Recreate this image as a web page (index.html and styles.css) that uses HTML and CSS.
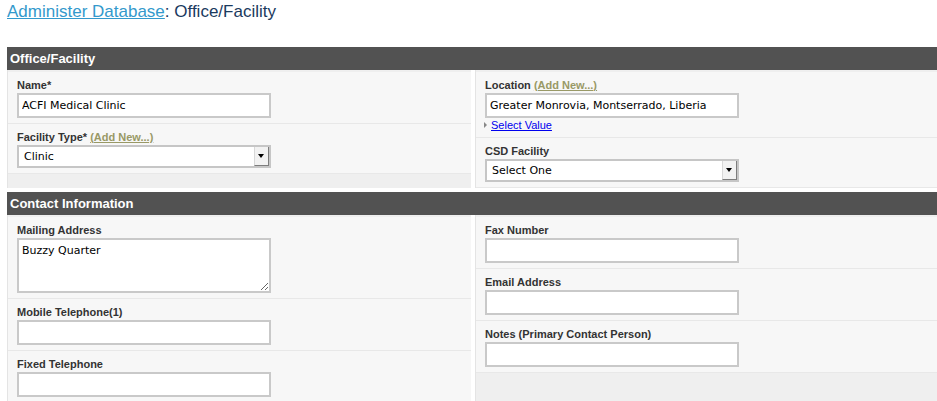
FILE: index.html
```html
<!DOCTYPE html>
<html lang="en">
<head>
    <meta charset="UTF-8">
    <meta name="viewport" content="width=device-width, initial-scale=1.0">
    <title>Administer Database: Office/Facility</title>
    <link rel="stylesheet" href="styles.css">
</head>
<body>
    <h1 class="page-title"><a href="#">Administer Database</a>: Office/Facility</h1>

    <div class="section">
        <div class="section-head">Office/Facility</div>
        <div class="section-body">
            <div class="col">
                <div class="field">
                    <label>Name*</label>
                    <input type="text" class="text" value="ACFI Medical Clinic">
                </div>
                <div class="field">
                    <label>Facility Type* <a href="#" class="add-new">(Add New...)</a></label>
                    <span class="select-wrap"><select><option>Clinic</option></select></span>
                </div>
            </div>
            <div class="col">
                <div class="field">
                    <label>Location <a href="#" class="add-new">(Add New...)</a></label>
                    <input type="text" class="text" value="Greater Monrovia, Montserrado, Liberia">
                    <div class="select-value"><span class="arrow"></span><a href="#">Select Value</a></div>
                </div>
                <div class="field">
                    <label>CSD Facility</label>
                    <span class="select-wrap"><select><option>Select One</option></select></span>
                </div>
            </div>
        </div>
    </div>

    <div class="section">
        <div class="section-head">Contact Information</div>
        <div class="section-body">
            <div class="col">
                <div class="field">
                    <label>Mailing Address</label>
                    <textarea class="text area">Buzzy Quarter</textarea>
                </div>
                <div class="field">
                    <label>Mobile Telephone(1)</label>
                    <input type="text" class="text" value="">
                </div>
                <div class="field">
                    <label>Fixed Telephone</label>
                    <input type="text" class="text" value="">
                </div>
            </div>
            <div class="col">
                <div class="field">
                    <label>Fax Number</label>
                    <input type="text" class="text" value="">
                </div>
                <div class="field">
                    <label>Email Address</label>
                    <input type="text" class="text" value="">
                </div>
                <div class="field">
                    <label>Notes (Primary Contact Person)</label>
                    <input type="text" class="text" value="">
                </div>
            </div>
        </div>
    </div>
</body>
</html>
```

FILE: styles.css
```css
html { background: #fff; }
body {
    margin: 0;
    padding: 0 0 0 7px;
    font-family: "Liberation Sans", Arial, sans-serif;
    overflow-x: hidden;
}
.page-title {
    margin: 2px 0 25px;
    font-size: 17px;
    font-weight: normal;
    line-height: 20px;
    color: #1b3a5e;
}
.page-title a { color: #3399cc; }

.section {
    width: 932px;
    margin-bottom: 4px;
}
.section-head {
    background: #525252;
    color: #fff;
    font-size: 13px;
    font-weight: bold;
    line-height: 23px;
    padding-left: 3px;
}
.section-body {
    display: grid;
    grid-template-columns: 464px 464px;
    gap: 4px;
}
.col {
    background: #efefef;
    border-left: 1px solid #e4e4e4;
    padding-top: 2px;
}
.field {
    background: #f7f7f7;
    padding: 6px 9px 5px;
    border-bottom: 1px solid #e8e8e8;
}
.field label {
    display: block;
    font-size: 11px;
    font-weight: bold;
    line-height: 14px;
    color: #333;
    margin-bottom: 1px;
}
.add-new { color: #999966; }

.text {
    display: block;
    box-sizing: border-box;
    width: 254px;
    height: 25px;
    margin: 0;
    border: 2px solid #c9c9c9;
    padding: 0 3px;
    background: #fff;
    font-family: "DejaVu Sans", Verdana, sans-serif;
    font-size: 11px;
    color: #000;
    outline: none;
}
.area {
    height: 55px;
    padding: 4px 3px;
    resize: both;
}

.select-wrap {
    display: block;
    position: relative;
    width: 254px;
}
.select-wrap select {
    display: block;
    box-sizing: border-box;
    width: 100%;
    height: 23px;
    margin: 0;
    border: 2px solid #c6c6c6;
    border-radius: 0;
    padding: 0 20px 0 5px;
    background: #fff;
    font-family: "DejaVu Sans", Verdana, sans-serif;
    font-size: 11px;
    color: #000;
    -webkit-appearance: none;
    appearance: none;
    outline: none;
}
.select-wrap::after {
    content: "";
    position: absolute;
    top: 2px;
    right: 2px;
    bottom: 2px;
    box-sizing: border-box;
    width: 15px;
    background: #f2f2f2;
    border-left: 1px solid #d8d8d8;
    border-right: 1px solid #7d7d7d;
    border-bottom: 1px solid #7d7d7d;
}
.select-wrap::before {
    content: "";
    position: absolute;
    top: 9px;
    right: 7px;
    border-left: 3px solid transparent;
    border-right: 3px solid transparent;
    border-top: 4px solid #000;
    z-index: 1;
}

.select-value {
    font-size: 11px;
    line-height: 14px;
}
.select-value a { color: #0000ee; }
.select-value .arrow {
    display: inline-block;
    width: 0;
    height: 0;
    margin: 0 4px 1px -1px;
    border-top: 3px solid transparent;
    border-bottom: 3px solid transparent;
    border-left: 3px solid #888;
}
```
